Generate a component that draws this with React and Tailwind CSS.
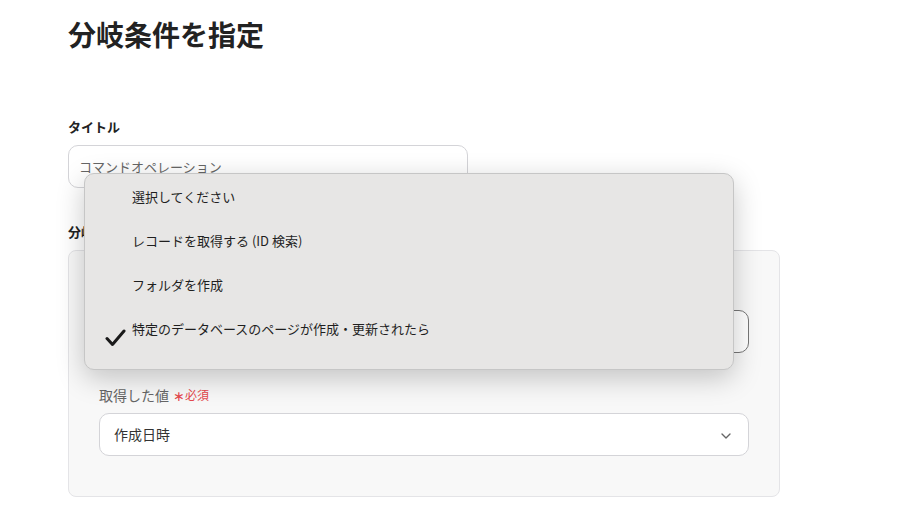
import React from "react";
import { ChevronDown } from "lucide-react";

export default function App() {
  const font = { fontFamily: '"Noto Sans CJK JP", "Noto Sans", sans-serif' };
  return (
    <div className="relative w-[910px] h-[512px] bg-white overflow-hidden" style={font}>
      <div className="pl-[68px] pt-4 w-[780px]">
        <h1 className="text-[28px] leading-[36px] font-bold text-[#222]">分岐条件を指定</h1>

        <div className="mt-[65px] flex flex-col gap-2">
          <div className="text-[13px] leading-5 font-bold text-[#222]">タイトル</div>
          <div className="w-[400px] h-[43px] rounded-[10px] border border-[#d4d4d8] bg-white flex items-center px-[10px] text-[13px] text-[#666]">
            コマンドオペレーション
          </div>
        </div>

        <div className="mt-[34px] flex flex-col gap-2">
          <div className="text-[13px] leading-5 font-bold text-[#222]">分岐</div>
          <div className="w-[712px] rounded-[8px] border border-[#e4e4e7] bg-[#f8f8f8] px-[30px] pt-[31px] pb-[40px] flex flex-col">
            <div className="flex flex-col gap-2">
              <div className="h-5" />
              <div className="h-[43px] rounded-[10px] border border-[#777] bg-white" />
            </div>
            <div className="mt-8 flex flex-col gap-2">
              <div className="text-[14px] leading-5 text-[#666] flex items-center gap-[4px]">
                <span>取得した値</span>
                <span className="text-[#e5484d] text-[14px]">∗</span>
                <span className="text-[#e5484d] text-[12px] -ml-[4px]">必須</span>
              </div>
              <div className="h-[43px] rounded-[10px] border border-[#d4d4d8] bg-white flex items-center justify-between pl-[14px] pr-[14px] text-[14px] text-[#333]">
                <span>作成日時</span>
                <ChevronDown size={16} strokeWidth={2} className="text-[#666] mt-[2px]" />
              </div>
            </div>
          </div>
        </div>
      </div>

      <div className="absolute left-[84px] top-[173px] w-[650px] h-[197px] rounded-[10px] border border-[#c6c6c6] bg-[#e7e6e5] shadow-[0_8px_28px_rgba(0,0,0,0.22)] pt-[1px]">
        {["選択してください", "レコードを取得する (ID 検索)", "フォルダを作成"].map((t) => (
          <div key={t} className="h-[44px] flex items-center pl-[47px] text-[13px] text-[#1f1f1f]">
            {t}
          </div>
        ))}
        <div className="relative h-[44px] flex items-center pl-[47px] text-[13px] text-[#1f1f1f]">
          特定のデータベースのページが作成・更新されたら
          <svg className="absolute left-[20px] top-[22px]" width="21" height="18" viewBox="0 0 21 18" fill="none">
            <path d="M2 9.5 L7.5 15.5 L19 2" stroke="#1a1a1a" strokeWidth="3" strokeLinecap="round" strokeLinejoin="round" />
          </svg>
        </div>
      </div>
    </div>
  );
}
